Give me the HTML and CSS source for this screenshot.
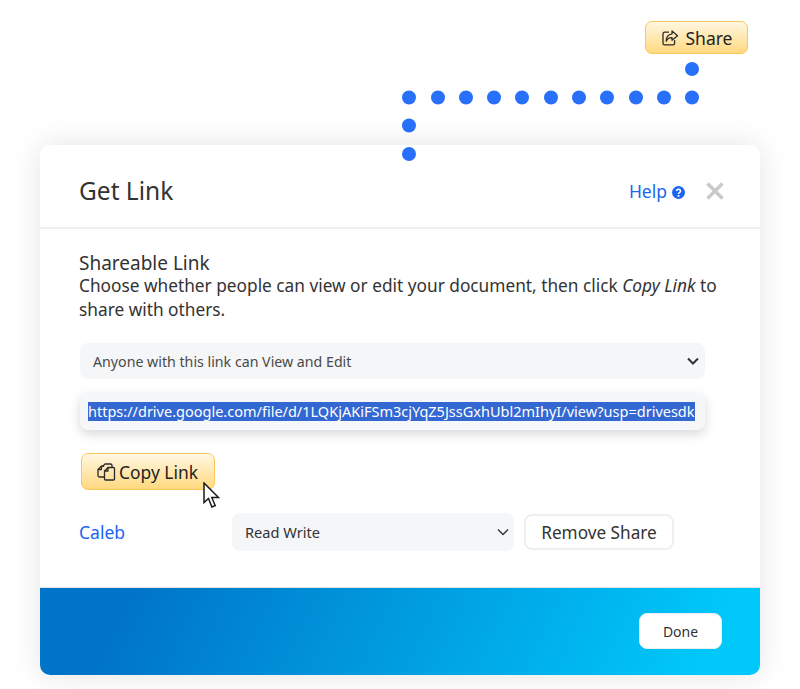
FILE: index.html
```html
<!DOCTYPE html>
<html lang="en">
<head>
<meta charset="utf-8">
<title>Get Link</title>
<link rel="stylesheet" href="styles.css">
</head>
<body>
<div class="page">
  <div class="top">
    <button class="gold share-btn" type="button">
      <svg class="ico" width="18" height="18" viewBox="0 0 18 18" fill="none" stroke="#2a2a2a" stroke-width="1.3" stroke-linejoin="round" stroke-linecap="round"><path d="M7.5 3.2H3.6a1.6 1.6 0 0 0-1.6 1.6v9.4a1.6 1.6 0 0 0 1.6 1.6H12a1.6 1.6 0 0 0 1.6-1.6v-2.6"/><path d="M11 2l5.6 4.7L11 11.2V8.6C8.2 8.5 6.4 9.6 5.2 12.200c0-4.400 2-6.800 5.800-7.400z"/></svg>
      <span>Share</span>
    </button>
    <svg class="dots" width="320" height="104" viewBox="0 0 320 104" fill="#2870fa" aria-hidden="true">
      <circle cx="301" cy="9" r="7"/>
      <circle cx="301" cy="37.500" r="7"/><circle cx="273" cy="37.500" r="7"/><circle cx="245" cy="37.500" r="7"/><circle cx="216" cy="37.500" r="7"/><circle cx="188" cy="37.500" r="7"/><circle cx="160" cy="37.500" r="7"/><circle cx="131" cy="37.500" r="7"/><circle cx="103" cy="37.500" r="7"/><circle cx="75" cy="37.500" r="7"/><circle cx="47" cy="37.500" r="7"/><circle cx="18" cy="37.500" r="7"/>
      <circle cx="18" cy="65.500" r="7"/><circle cx="18" cy="94" r="7"/>
    </svg>
  </div>
  <section class="modal">
    <header class="head">
      <h1 class="title">Get Link</h1>
      <div class="head-actions">
        <a class="help">Help
          <svg class="help-ico" width="13" height="13" viewBox="0 0 13 13"><circle cx="6.500" cy="6.500" r="6.500" fill="#1a66f0"/><path d="M4.500 5a2 1.800 0 1 1 3 1.600c-.7.4-1 .7-1 1.400" fill="none" stroke="#fff" stroke-width="1.600"/><rect x="5.600" y="9" width="1.800" height="1.800" fill="#fff"/></svg>
        </a>
        <svg class="close" width="18" height="18" viewBox="0 0 18 18" stroke="#c9c9c9" stroke-width="3.400"><path d="M1.500 1.500l15 15M16.500 1.500l-15 15"/></svg>
      </div>
    </header>
    <div class="body">
      <h2 class="sub">Shareable Link</h2>
      <p class="desc"><span class="line">Choose whether people can view or edit your document, then click <em>Copy Link</em> to</span><span class="line">share with others.</span></p>
      <select class="select wide"><option>Anyone with this link can View and Edit</option></select>
      <div class="url"><span class="sel">https://drive.google.com/file/d/1LQKjAKiFSm3cjYqZ5JssGxhUbl2mIhyI/view?usp=drivesdk</span></div>
      <div class="copy-wrap">
        <button class="gold copy-btn" type="button">
          <svg class="ico" width="20" height="20" viewBox="0 0 20 20" fill="none" stroke="#2a2a2a" stroke-width="1.300" stroke-linejoin="round"><path d="M8 15H3.500A1.500 1.500 0 0 1 2 13.500V7.500L5.500 4h2.500"/><path d="M5.500 4v3.500H2"/><path d="M7.500 5V3.500L9 2h5.500A1.500 1.500 0 0 1 16 3.500V5"/><path d="M8.500 9L12 5.500h5.500a1 1 0 0 1 1 1V17a1 1 0 0 1-1 1H9.500a1 1 0 0 1-1-1z"/><path d="M12 5.500V9H8.500"/></svg>
          <span>Copy Link</span>
        </button>
        <svg class="cursor" width="17" height="27" viewBox="0 0 17 27"><path d="M1 1v19.500l4.500-4 3.400 8.500 3.300-1.500-3.400-8H15.500z" fill="#fff" stroke="#1a1a1a" stroke-width="1.500" stroke-linejoin="miter"/></svg>
      </div>
      <div class="person">
        <a class="name">Caleb</a>
        <select class="select role"><option>Read Write</option></select>
        <button class="remove" type="button">Remove Share</button>
      </div>
    </div>
    <footer class="foot">
      <button class="done" type="button">Done</button>
    </footer>
  </section>
</div>
</body>
</html>
```
FILE: styles.css
```css
* { box-sizing: border-box; }
html, body { margin: 0; padding: 0; background: #fff; }
body { font-family: "Noto Sans", "Liberation Sans", sans-serif; color: #2f2f2f; }
.page { width: 800px; height: 689px; padding: 0 40px; overflow: hidden; }
.top { position: relative; height: 145px; padding: 21px 12px 0 0; display: flex; justify-content: flex-end; align-items: flex-start; }
.dots { position: absolute; left: 351px; top: 60px; z-index: 2; }
.gold {
  display: inline-flex; align-items: center; justify-content: center;
  border: 1.500px solid #fcc65a; border-radius: 7px;
  background: linear-gradient(#fff7e2, #ffd97f);
  color: #222; font-family: inherit; padding: 0;
}
.share-btn { width: 103px; height: 33px; gap: 7px; font-size: 17.500px; }
.copy-btn { width: 134px; height: 37px; gap: 3px; font-size: 17.400px; padding-right: 2px; }
.modal { width: 720px; height: 530px; background: #fff; border-radius: 10px; box-shadow: 0 0 30px rgba(0,0,0,.11); display: flex; flex-direction: column; overflow: hidden; }
.head { height: 84px; border-bottom: 2px solid #efefef; display: flex; justify-content: space-between; align-items: center; padding: 9px 36px 0 39px; }
.title { margin: 0; font-size: 24.500px; font-weight: 400; color: #333; }
.head-actions { display: flex; align-items: center; gap: 21px; }
.help { color: #1a66f0; font-size: 17.500px; display: inline-flex; align-items: center; gap: 5px; }
.help-ico { margin-top: 3px; }
.body { flex: 1; padding: 23px 40px 0 39px; }
.sub { margin: 0; font-size: 19px; font-weight: 400; line-height: 22px; color: #333; }
.desc { margin: 0 0 21px; font-size: 17.270px; line-height: 24px; color: #333; }
.line { display: block; white-space: nowrap; }
.select {
  appearance: none; border: none; border-radius: 8px; font-family: inherit;
  background-color: #f4f6f8;
  background-image: url("data:image/svg+xml,%3Csvg xmlns='http://www.w3.org/2000/svg' width='12' height='8' viewBox='0 0 12 8'%3E%3Cpath d='M1 1.500l5 5 5-5' fill='none' stroke='%23333' stroke-width='2'/%3E%3C/svg%3E");
  background-repeat: no-repeat; background-position: right 6px center;
}
.wide { display: block; width: 625px; height: 36px; margin-left: 1px; padding: 0 13px; font-size: 14.200px; color: #4a4a4a; }
.url { width: 625px; height: 37px; margin: 14px 0 0 1px; background: #f5f7f9; border-radius: 8px; box-shadow: 0 4px 12px rgba(0,0,0,.16); padding: 0 8px 1px; display: flex; align-items: center; font-size: 14.500px; white-space: nowrap; overflow: hidden; }
.sel { background: #3367d1; color: #fff; line-height: 19px; }
.copy-wrap { position: relative; margin: 23px 0 0 2px; height: 37px; }
.cursor { position: absolute; left: 122px; top: 29px; }
.person { display: flex; align-items: center; margin-top: 23px; }
.name { width: 153px; color: #1a66f0; font-size: 17.500px; }
.role {
  width: 282px; height: 38px; padding: 0 13px; font-size: 14.600px; color: #333;
  background-image: url("data:image/svg+xml,%3Csvg xmlns='http://www.w3.org/2000/svg' width='12' height='8' viewBox='0 0 12 8'%3E%3Cpath d='M1 1.500l5 5 5-5' fill='none' stroke='%23333' stroke-width='1.400'/%3E%3C/svg%3E");
  background-position: right 5px center;
}
.remove { width: 150px; height: 36px; margin-left: 10px; background: #fff; border: 2px solid #efefef; border-radius: 8px; font-family: inherit; font-size: 17.200px; color: #333; padding: 0; }
.foot { height: 88px; background: linear-gradient(115deg, #0074c8 12%, #00c8fa 92%); border-top: 1px solid #e2e2e2; display: flex; justify-content: flex-end; align-items: center; padding: 0 38px 1px 0; }
.done { width: 83px; height: 36px; background: #fff; border: 1px solid #eee; border-radius: 8px; font-family: inherit; font-size: 14px; color: #333; padding: 0; }
```
